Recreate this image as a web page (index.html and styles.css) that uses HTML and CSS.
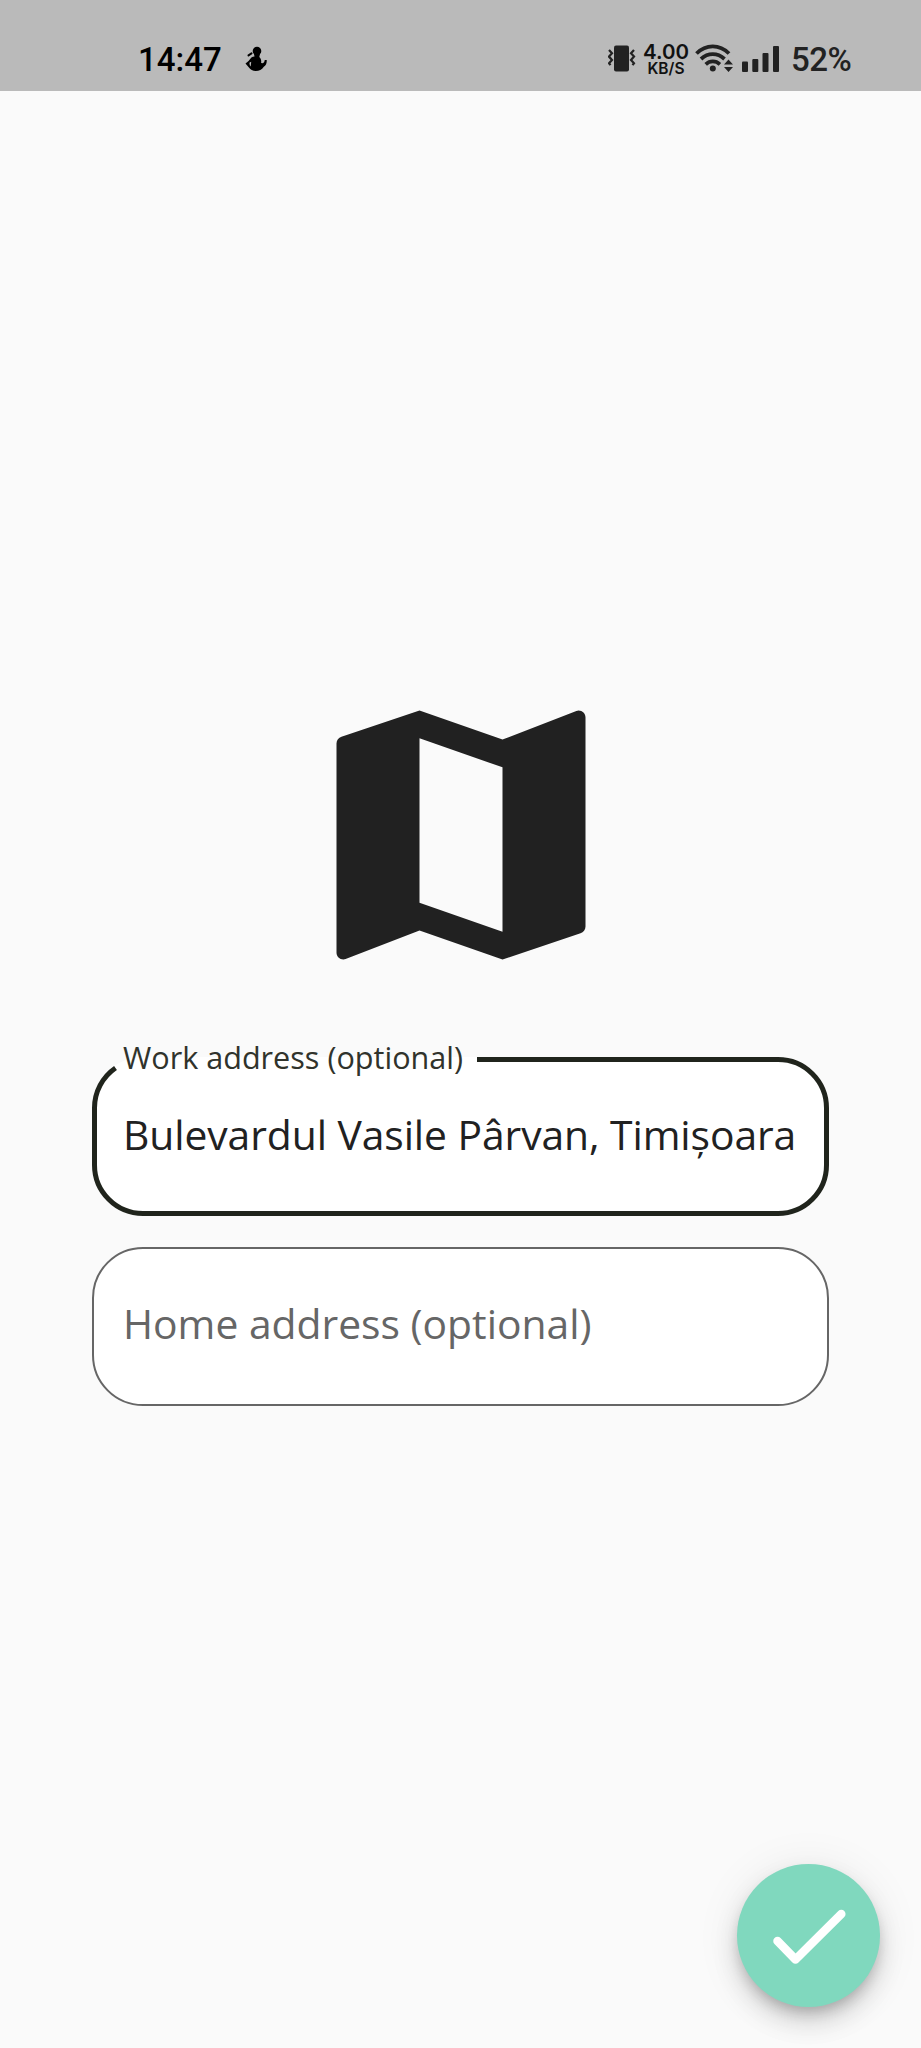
FILE: index.html
```html
<!DOCTYPE html>
<html lang="en">
<head>
<meta charset="utf-8">
<title>Addresses</title>
<link rel="stylesheet" href="styles.css">
</head>
<body>
<div class="screen">
  <header class="status">
    <div class="status-left">
      <span class="clock">14:47</span>
      <svg class="figure" width="22" height="26" viewBox="0 0 22 26">
        <circle cx="12" cy="5" r="4.3"/>
        <path d="M9 8h6l-.7 3c1.700 1.500 2.200 3.500 1.800 6l1.600.3c1.300-.4 2-1.600 2-3.200l2-.2c.3 3-.7 5.500-2.900 6.800-2 3-4.600 4.300-8 4.300-3 0-5.600-1.400-7.100-3.700L.5 17.500c2.200-1.200 4-3.400 5.900-5.900 1-.7 2-.9 3.100-1zM4.600 16.400c-.3 1.600.1 3 1.100 4l.5-4.600z" fill-rule="evenodd"/>
        <path d="M3.500 9.400l3-2" stroke="#000" stroke-width="2" stroke-linecap="round"/>
      </svg>
    </div>
    <div class="status-right">
      <svg class="vibrate" width="28" height="27" viewBox="0 0 28 27">
        <rect x="6" y="0.500" width="15" height="26" rx="2" fill="#222"/>
        <path d="M1 5l3 3.300-3 3.300 3 3.300-3 3.300 1.500 2M26 5l-3 3.300 3 3.300-3 3.300 3 3.300-1.500 2" fill="none" stroke="#222" stroke-width="2.200"/>
      </svg>
      <div class="rate"><span class="rate-value">4.00</span><span class="rate-unit">KB/S</span></div>
      <svg class="wifi" width="39" height="30" viewBox="0 0 39 30">
        <path d="M1.500 10.500C11 1 24.500 1 34 10.500M6 16c7-6.600 16.500-6.600 23.500 0M10.700 21.300c4.200-3.800 10-3.800 14.200 0" fill="none" stroke="#222" stroke-width="3.800"/>
        <circle cx="17.800" cy="25.500" r="3"/>
        <path d="M33.500 16.500l4.500 5h-9zM33.500 29l4.500-5h-9z"/>
      </svg>
      <svg class="signal" width="37" height="26" viewBox="0 0 37 26">
        <rect x="0" y="15.500" width="6" height="10.500" rx="1"/>
        <rect x="10.300" y="13" width="6" height="13" rx="1"/>
        <rect x="20.500" y="7" width="6" height="19" rx="1"/>
        <rect x="31" y="0" width="6" height="26" rx="1"/>
      </svg>
      <span class="battery">52%</span>
    </div>
  </header>

  <main class="content">
    <svg class="map" viewBox="0 0 24 24">
      <path d="M20.500 3l-.16.030L15 5.100 9 3 3.360 4.900c-.21.070-.36.250-.36.480V20.500c0 .28.220.5.500.5l.16-.030L9 18.900l6 2.100 5.640-1.900c.21-.070.360-.25.360-.48V3.500c0-.28-.22-.5-.5-.5zM15 19l-6-2.110V5l6 2.110V19z"/>
    </svg>
    <div class="field field-active">
      <svg class="outline" width="737" height="159" viewBox="0 0 737 159">
        <path d="M23.500 11A48.500 48.500 0 0 0 2.500 51V108A48.500 48.500 0 0 0 51 156.500H686A48.500 48.500 0 0 0 734.500 108V51A48.500 48.500 0 0 0 686 2.500H385"/>
      </svg>
      <span class="label">Work address (optional)</span>
      <span class="value">Bulevardul Vasile Pârvan, Timișoara</span>
    </div>
    <div class="field field-idle">
      <span class="value">Home address (optional)</span>
    </div>
  </main>

  <button class="fab" aria-label="Confirm">
    <svg width="143" height="143" viewBox="0 0 143 143">
      <path d="M40.500 77l18 18.500L104.300 50"/>
    </svg>
  </button>
</div>
</body>
</html>
```
FILE: styles.css
```css
* { box-sizing: border-box; }
body { margin: 0; background: #fafafa; }
.screen {
  position: relative;
  width: 921px;
  height: 2048px;
  overflow: hidden;
  background: #fafafa;
}
.status {
  display: flex;
  justify-content: space-between;
  height: 91px;
  padding: 0 69px 0 138px;
  background: #bababa;
  font-family: Roboto, sans-serif;
}
.status-left, .status-right { display: flex; align-items: flex-start; }
.clock {
  width: 107px;
  margin-top: 40px;
  font-size: 33px;
  line-height: 40px;
  font-weight: 500;
  color: #000;
}
.figure { margin-top: 46px; }
.status-right { fill: #222; color: #222; }
.vibrate { margin-top: 45px; }
.rate {
  display: flex;
  flex-direction: column;
  align-items: center;
  width: 46px;
  margin: 43px 6px 0 7px;
  font-family: Inter, sans-serif;
  font-weight: 600;
  color: #111;
}
.rate-value { font-size: 20.500px; line-height: 17px; }
.rate-unit { font-size: 15.500px; line-height: 17px; font-weight: 600; }
.wifi { margin-top: 43px; }
.signal { margin: 46px 12px 0 8px; }
.battery {
  width: 61px;
  margin-top: 40px;
  font-size: 33px;
  line-height: 40px;
  font-weight: 500;
  letter-spacing: -.5px;
}
.content {
  display: flex;
  flex-direction: column;
  align-items: center;
  padding-top: 577.500px;
}
.map { width: 332px; height: 332px; fill: #212121; }
.field {
  position: relative;
  display: flex;
  align-items: center;
  width: 737px;
  height: 159px;
  padding: 0 0 6px 31px;
  border-radius: 51px;
  background: #fff;
  font-family: "Open Sans", sans-serif;
  white-space: nowrap;
}
.field-active { margin-top: 56.500px; color: #212121; }
.field-active .value { letter-spacing: -.07px; }
.field-idle {
  margin-top: 31px;
  padding: 0 0 8px 29px;
  border: 2px solid #666;
  color: #666;
}
.outline {
  position: absolute;
  left: 0;
  top: 0;
  fill: none;
  stroke: #20241c;
  stroke-width: 5;
}
.label {
  position: absolute;
  left: 31px;
  top: -20px;
  font-size: 30.600px;
  line-height: 40px;
  color: #30332c;
}
.value { font-size: 40.800px; line-height: 56px; }
.fab {
  position: absolute;
  right: 41px;
  bottom: 41px;
  width: 143px;
  height: 143px;
  padding: 0;
  border: 0;
  border-radius: 50%;
  background: #80d8be;
  box-shadow: 0 8px 13px -3px rgba(0,0,0,.2), 0 15px 26px rgba(0,0,0,.14), 0 3px 46px rgba(0,0,0,.08);
}
.fab svg {
  display: block;
  fill: none;
  stroke: #fff;
  stroke-width: 8.500;
  stroke-linecap: round;
  stroke-linejoin: round;
}
```
